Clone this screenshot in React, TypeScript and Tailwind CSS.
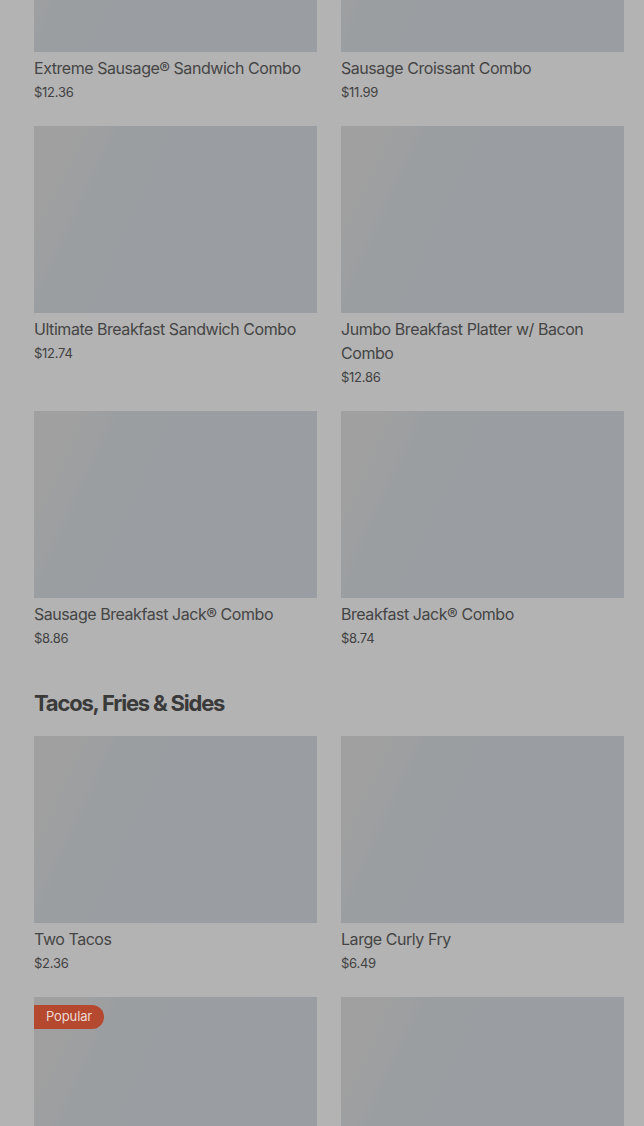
import React from 'react';

interface MenuItem {
  name: string;
  price: string;
  popular?: boolean;
}

const breakfast: MenuItem[] = [
  { name: 'Extreme Sausage® Sandwich Combo', price: '$12.36' },
  { name: 'Sausage Croissant Combo', price: '$11.99' },
  { name: 'Ultimate Breakfast Sandwich Combo', price: '$12.74' },
  { name: 'Jumbo Breakfast Platter w/ Bacon Combo', price: '$12.86' },
  { name: 'Sausage Breakfast Jack® Combo', price: '$8.86' },
  { name: 'Breakfast Jack® Combo', price: '$8.74' },
];

const sides: MenuItem[] = [
  { name: 'Two Tacos', price: '$2.36' },
  { name: 'Large Curly Fry', price: '$6.49' },
  { name: 'Chicken Nuggets', price: '$5.99', popular: true },
  { name: 'Small Curly Fry', price: '$3.29' },
];

const ItemCard: React.FC<{ item: MenuItem }> = ({ item }) => (
  <div className="flex flex-col">
    <div className="relative h-[187px] w-full bg-[linear-gradient(115deg,#a0a0a0_0%,#a0a0a0_12%,#9b9ea1_24%,#9a9da1_100%)]">
      {item.popular && (
        <span className="absolute left-0 top-2 flex h-6 items-center rounded-r-full bg-[#b5492f] px-3 text-[13px] tracking-[-0.01em] text-[#ecd9d2]">
          Popular
        </span>
      )}
    </div>
    <div className="mt-1 text-base leading-6 tracking-[-0.028em] text-[#454545]">{item.name}</div>
    <div className="text-[13px] leading-6 tracking-[-0.02em] text-[#424242]">{item.price}</div>
  </div>
);

export default function App() {
  return (
    <div
      className="min-h-[1126px] bg-[#b3b3b3] pl-[34px] pr-5"
      style={{ fontFamily: 'Inter, "Noto Sans", sans-serif' }}
    >
      <div className="-mt-[135px] grid grid-cols-2 gap-x-6 gap-y-[22px]">
        {breakfast.map((item) => (
          <ItemCard key={item.name} item={item} />
        ))}
      </div>
      <h2 className="mt-[37px] mb-[17px] text-[22px] font-bold leading-8 tracking-[-0.055em] text-[#3a3a3a]">
        Tacos, Fries &amp; Sides
      </h2>
      <div className="grid grid-cols-2 gap-x-6 gap-y-[22px] pb-6">
        {sides.map((item) => (
          <ItemCard key={item.name} item={item} />
        ))}
      </div>
    </div>
  );
}
